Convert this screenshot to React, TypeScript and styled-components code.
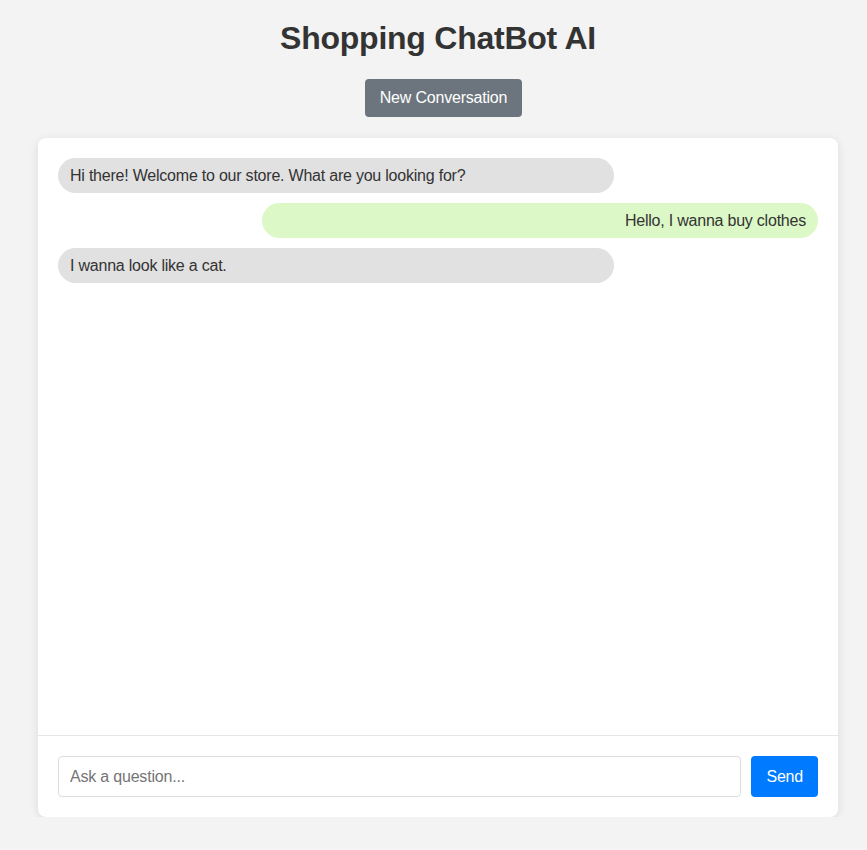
import React from "react";
import styled, { createGlobalStyle } from "styled-components";

const Global = createGlobalStyle`
  html, body { margin: 0; padding: 0; }
  body {
    background: #f3f3f3;
    font-family: "Liberation Sans", Arial, sans-serif;
    color: #333;
    letter-spacing: -0.22px;
  }
  * { box-sizing: border-box; }
`;

const Page = styled.div`
  display: flex;
  flex-direction: column;
  align-items: center;
  padding: 20px 29px 0 38px;
`;

const Title = styled.h1`
  margin: 0;
  font-size: 32px;
  line-height: 37px;
  font-weight: 700;
  color: #333;
  letter-spacing: -0.25px;
`;

const NewButton = styled.button`
  margin: 22px 0 0 11px;
  height: 38px;
  padding: 0 15px;
  background: #6c757d;
  color: #fff;
  border: none;
  border-radius: 4px;
  font-family: inherit;
  font-size: 16px;
  letter-spacing: -0.2px;
  cursor: pointer;
`;

const Card = styled.div`
  margin-top: 21px;
  width: 800px;
  height: 679px;
  background: #fff;
  border-radius: 8px;
  box-shadow: 0 2px 10px rgba(0, 0, 0, 0.1);
  display: flex;
  flex-direction: column;
  overflow: hidden;
`;

const Messages = styled.div`
  flex: 1;
  padding: 20px;
  display: flex;
  flex-direction: column;
  gap: 10px;
  overflow-y: auto;
`;

const Bubble = styled.div<{ $user?: boolean }>`
  box-sizing: content-box;
  width: 70%;
  max-width: 532px;
  padding: 8px 12px;
  line-height: 19px;
  font-size: 16px;
  border-radius: 18px;
  color: #333;
  background: ${(p) => (p.$user ? "#dcf8c6" : "#e1e1e1")};
  align-self: ${(p) => (p.$user ? "flex-end" : "flex-start")};
  text-align: ${(p) => (p.$user ? "right" : "left")};
`;

const InputBar = styled.form`
  border-top: 1px solid #e5e5e5;
  padding: 20px;
  display: flex;
  gap: 10px;
`;

const Input = styled.input`
  flex: 1;
  height: 41px;
  padding: 0 11px;
  border: 1px solid #ddd;
  border-radius: 4px;
  font-family: inherit;
  font-size: 16px;
  letter-spacing: -0.2px;
  color: #333;
  outline: none;
  &::placeholder { color: #757575; }
`;

const SendButton = styled.button`
  height: 41px;
  padding: 0 15px;
  background: #007bff;
  color: #fff;
  border: none;
  border-radius: 4px;
  font-family: inherit;
  font-size: 16px;
  letter-spacing: -0.2px;
  cursor: pointer;
`;

const messages = [
  { user: false, text: "Hi there! Welcome to our store. What are you looking for?" },
  { user: true, text: "Hello, I wanna buy clothes" },
  { user: false, text: "I wanna look like a cat." },
];

export default function App() {
  return (
    <>
      <Global />
      <Page>
        <Title>Shopping ChatBot AI</Title>
        <NewButton>New Conversation</NewButton>
        <Card>
          <Messages>
            {messages.map((m, i) => (
              <Bubble key={i} $user={m.user}>
                {m.text}
              </Bubble>
            ))}
          </Messages>
          <InputBar onSubmit={(e) => e.preventDefault()}>
            <Input placeholder="Ask a question..." />
            <SendButton type="submit">Send</SendButton>
          </InputBar>
        </Card>
      </Page>
    </>
  );
}
